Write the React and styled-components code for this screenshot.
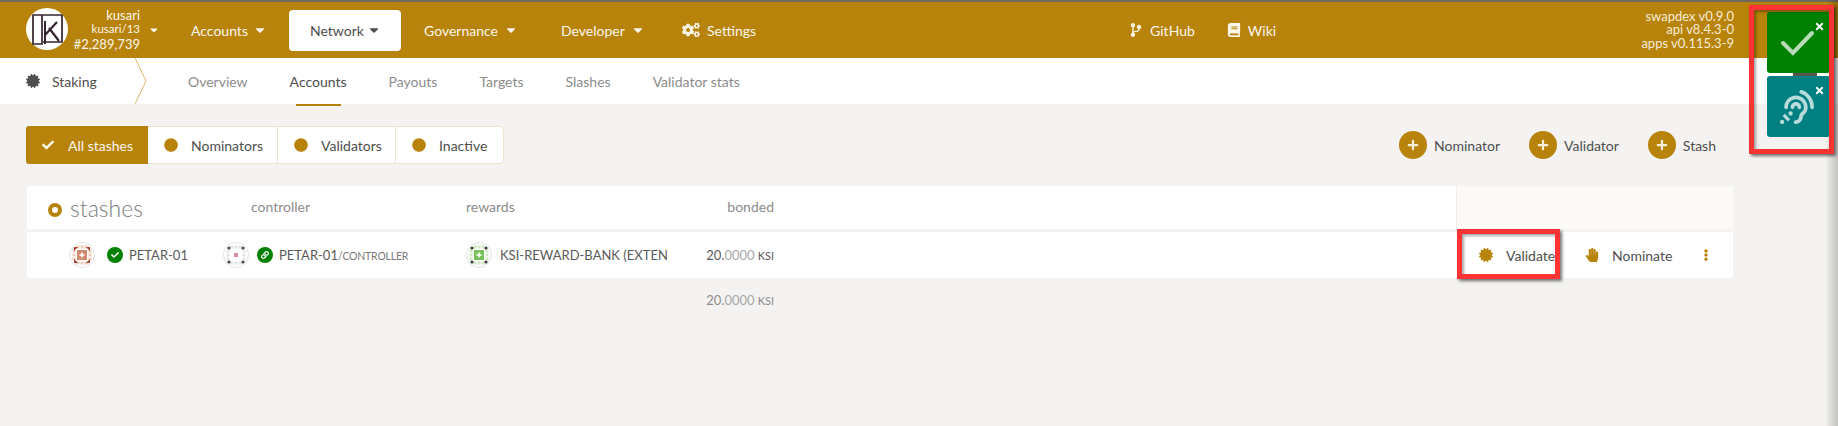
import React from "react";
import styled, { createGlobalStyle } from "styled-components";
import {
  FaCaretDown,
  FaCertificate,
  FaCheck,
  FaCircle,
  FaCodeBranch,
  FaCogs,
  FaBook,
  FaEllipsisV,
  FaHandPaper,
  FaLink,
  FaPlus,
  FaTimes,
  FaAssistiveListeningSystems,
} from "react-icons/fa";

const gold = "#b7830a";

const Global = createGlobalStyle`
  html, body { margin: 0; padding: 0; background: #f4f3f1; }
  body {
    font-family: Lato, "Open Sans", sans-serif;
    font-size: 14px;
    color: #4e4e4e;
    overflow: hidden;
  }
  * { box-sizing: border-box; }
`;

const Page = styled.div`
  position: relative;
  width: 1838px;
  height: 426px;
  overflow: hidden;
`;

const Header = styled.header`
  display: flex;
  align-items: center;
  height: 58px;
  padding-left: 26px;
  background: ${gold};
  border-top: 2px solid #6f6a60;
  color: #fbf6ea;
`;

const LogoWrap = styled.div`
  width: 42px;
  height: 42px;
  flex: none;
  margin-top: -2px;
`;

const Chain = styled.div`
  width: 72px;
  flex: none;
  text-align: right;
  line-height: 14.5px;
  font-size: 13px;
  margin-top: -1px;
  & > div:nth-child(2) { font-size: 11.5px; }
`;

const ChainCaret = styled.div`
  width: 30px;
  flex: none;
  padding-left: 8px;
  font-size: 12px;
  display: flex;
`;

const NavList = styled.nav`
  display: flex;
  align-items: center;
  gap: 2px;
`;

const NavItem = styled.div`
  display: flex;
  align-items: center;
  justify-content: space-between;
  width: ${(p) => p.$w}px;
  height: 41px;
  padding: 0 20px 0 21px;
  border-radius: 4px;
  background: ${(p) => (p.$active ? "#fff" : "transparent")};
  color: ${(p) => (p.$active ? "#4e4e4e" : "#fbf6ea")};
  svg { font-size: 14px; }
`;

const PlainLink = styled.div`
  display: flex;
  align-items: center;
  gap: 7px;
  margin-left: ${(p) => p.$left || 0}px;
  svg { font-size: ${(p) => p.$icon || 15}px; }
`;

const Versions = styled.div`
  margin-left: auto;
  padding-right: 104px;
  text-align: right;
  font-size: 13px;
  line-height: 13.5px;
  color: #f5ecd6;
`;

const SubBar = styled.div`
  display: flex;
  align-items: stretch;
  height: 46px;
  background: #fff;
`;

const Section = styled.div`
  display: flex;
  align-items: center;
  gap: 12px;
  width: 135px;
  padding-left: 26px;
  color: #4e4e4e;
  svg { font-size: 14px; }
`;

const Chevron = styled.svg`
  width: 12px;
  height: 46px;
  flex: none;
  margin-right: 20px;
`;

const Tab = styled.div`
  position: relative;
  display: flex;
  align-items: center;
  padding: 0 21px;
  color: ${(p) => (p.$active ? "#4e4e4e" : "#8c8c8c")};
  &::after {
    content: "";
    display: ${(p) => (p.$active ? "block" : "none")};
    position: absolute;
    left: 27px;
    right: 27px;
    bottom: -2px;
    height: 2px;
    background: ${gold};
  }
`;

const Content = styled.main`
  padding: 22px 105px 0 26px;
`;

const Toolbar = styled.div`
  display: flex;
  align-items: center;
  justify-content: space-between;
`;

const Group = styled.div`
  display: flex;
  height: 38px;
  background: #fff;
  border: 1px solid #eee3cb;
  border-radius: 4px;
`;

const GroupButton = styled.div`
  display: flex;
  align-items: center;
  gap: ${(p) => (p.$active ? 14 : 13)}px;
  width: ${(p) => p.$w}px;
  padding-left: 16px;
  background: ${(p) => (p.$active ? gold : "transparent")};
  color: ${(p) => (p.$active ? "#fbf6ea" : "#4e4e4e")};
  border-right: ${(p) => (p.$last || p.$active ? "none" : "1px solid #eee3cb")};
  border-radius: ${(p) => (p.$active ? "3px 0 0 3px" : "0")};
  margin: ${(p) => (p.$active ? "-1px 0 -1px -1px" : "0")};
  svg {
    font-size: ${(p) => (p.$active ? 12 : 14)}px;
    color: ${(p) => (p.$active ? "#fbf6ea" : gold)};
  }
`;

const AddList = styled.div`
  display: flex;
  align-items: center;
  gap: 29px;
  padding-right: 17px;
`;

const AddButton = styled.div`
  display: flex;
  align-items: center;
  gap: 7px;
`;

const PlusCircle = styled.span`
  display: flex;
  align-items: center;
  justify-content: center;
  width: 28px;
  height: 28px;
  border-radius: 50%;
  background: ${gold};
  color: #f8efd8;
  font-size: 12px;
`;

const Table = styled.div`
  margin-top: 22px;
  margin-left: 1px;
  display: flex;
  flex-direction: column;
  gap: 3px;
`;

const HeadRow = styled.div`
  display: grid;
  grid-template-columns: 224px 215px 308px 1fr 277px;
  height: 43px;
  background: #fff;
  border-radius: 4px 4px 0 0;
  overflow: hidden;
`;

const HeadCell = styled.div`
  display: flex;
  align-items: center;
  justify-content: ${(p) => (p.$right ? "flex-end" : "flex-start")};
  padding-bottom: 2px;
  color: #8c8c8c;
  font-size: 14px;
`;

const Title = styled.div`
  display: flex;
  align-items: center;
  gap: 8px;
  padding-left: 21px;
  font-size: 23px;
  font-weight: 300;
  color: #7d7d7d;
`;

const TitleDot = styled.span`
  width: 14px;
  height: 14px;
  margin-top: 4px;
  border-radius: 50%;
  border: 4px solid ${gold};
  background: #fff;
`;

const ActionsHead = styled.div`
  grid-column: 5;
  background: #fbfaf6;
  border-left: 1px solid #f0efeb;
`;

const Row = styled.div`
  display: grid;
  grid-template-columns: 196px 243px 201px 107px 1fr 277px;
  align-items: center;
  height: ${(p) => (p.$plain ? 38 : 46)}px;
  background: ${(p) => (p.$plain ? "transparent" : "#fff")};
  border-radius: 0 0 4px 4px;
`;

const AccountCell = styled.div`
  display: flex;
  align-items: center;
  min-width: 0;
  padding-left: ${(p) => p.$left || 0}px;
`;

const Name = styled.span`
  margin-left: ${(p) => p.$gap}px;
  white-space: nowrap;
  overflow: hidden;
  font-size: 13px;
  color: #5a5a5a;
`;

const Suffix = styled.span`
  font-size: 10.5px;
  letter-spacing: -0.2px;
  color: #7a7a7a;
`;

const Badge = styled.span`
  display: flex;
  align-items: center;
  justify-content: center;
  width: 16px;
  height: 16px;
  margin-left: ${(p) => p.$left}px;
  flex: none;
  border-radius: 50%;
  background: #008000;
  color: #fff;
  font-size: 8px;
`;

const Balance = styled.div`
  text-align: right;
  white-space: nowrap;
  font-size: 13px;
  color: ${(p) => (p.$muted ? "#8c8c8c" : "#5a5a5a")};
`;

const Decimals = styled.span`
  color: #a8a8a8;
`;

const Unit = styled.span`
  font-size: 11px;
  margin-left: 3px;
`;

const Actions = styled.div`
  grid-column: 6;
  display: flex;
  align-items: center;
  padding-left: 23px;
`;

const Action = styled.div`
  display: flex;
  align-items: center;
  gap: 13px;
  width: ${(p) => p.$w}px;
  svg { color: ${gold}; font-size: 14px; }
`;

const More = styled.span`
  display: flex;
  color: ${gold};
  font-size: 12px;
`;

const ToastColumn = styled.div`
  position: absolute;
  top: 12px;
  left: 1767px;
  display: flex;
  flex-direction: column;
  gap: 3px;
  width: 63px;
  &::after {
    content: "";
    position: absolute;
    top: 61px;
    left: 26px;
    width: 24px;
    height: 3px;
    background: #555;
  }
`;

const Toast = styled.div`
  position: relative;
  display: flex;
  align-items: center;
  justify-content: center;
  height: 61px;
  padding-right: 3px;
  border-radius: 3px;
  background: ${(p) => p.$bg};
  color: rgba(255, 255, 255, 0.72);
  font-size: ${(p) => p.$icon}px;
`;

const ToastClose = styled.span`
  position: absolute;
  top: 9px;
  right: 5px;
  display: flex;
  color: #fff;
  font-size: 11px;
`;

const RedBox = styled.div`
  position: absolute;
  left: ${(p) => p.$x}px;
  top: ${(p) => p.$y}px;
  width: ${(p) => p.$w}px;
  height: ${(p) => p.$h}px;
  border: 5px solid #ff3333;
  box-shadow: 2px 2px 3px rgba(0, 0, 0, 0.55), inset 2px 2px 3px rgba(0, 0, 0, 0.35);
`;

const EdgeShade = styled.div`
  position: absolute;
  top: 0;
  right: 0;
  width: 13px;
  height: 100%;
  background: linear-gradient(to right, rgba(0, 0, 0, 0), rgba(0, 0, 0, 0.2));
`;

const Logo = () => (
  <svg width="42" height="42" viewBox="0 0 42 42">
    <circle cx="21" cy="21" r="21" fill="#fff" />
    <g fill="none" stroke="#33232f" strokeWidth="1.7">
      <path d="M7 7h9v29H7zM16 7h20v27H17" />
      <path d="M19 13v23" strokeWidth="2" />
      <path d="M19 27l12-13M23 20l10 13" strokeWidth="2.2" />
    </g>
  </svg>
);

const CheckMark = () => (
  <svg width="35" height="26" viewBox="0 0 35 26">
    <path d="M3 13l10 10L32 3" fill="none" stroke="rgba(255,255,255,0.72)" strokeWidth="4" strokeLinecap="round" />
  </svg>
);

// small jdenticon-style account picture
const Identicon = ({ core, corner, side, cornerShape }) => {
  const corners = [[5, 5], [21, 5], [5, 21], [21, 21]];
  const sides = [[13, 5], [13, 21], [5, 13], [21, 13], [9, 5], [17, 5], [9, 21], [17, 21], [5, 9], [5, 17], [21, 9], [21, 17]];
  const coreSize = core.size || 10;
  return (
    <svg width="26" height="26" viewBox="0 0 26 26" style={{ flex: "none" }}>
      <circle cx="13" cy="13" r="12.5" fill="#fff" stroke="#e3e3e3" />
      {sides.map(([x, y], i) => (
        <rect key={i} x={x - 1.5} y={y - 1.5} width="3" height="3" fill={side} />
      ))}
      {corners.map(([x, y], i) =>
        cornerShape === "dot" ? (
          <circle key={i} cx={x + (x < 13 ? 1 : -1)} cy={y + (y < 13 ? 1 : -1)} r="1.6" fill={corner} />
        ) : (
          <path
            key={i}
            d={`M${x} ${y}l${x < 13 ? 4 : -4} 0l${x < 13 ? -4 : 4} ${y < 13 ? 4 : -4}z`}
            fill={corner}
          />
        )
      )}
      <rect x={13 - coreSize / 2} y={13 - coreSize / 2} width={coreSize} height={coreSize} fill={core.color} />
      {core.star && <path d="M13 9.5l1 2.5 2.5 1-2.5 1-1 2.5-1-2.5-2.5-1 2.5-1z" fill="#fff" />}
    </svg>
  );
};

const navItems = [
  { label: "Accounts", w: 117 },
  { label: "Network", w: 112, active: true },
  { label: "Governance", w: 135 },
  { label: "Developer", w: 125 },
];

const tabs = ["Overview", "Accounts", "Payouts", "Targets", "Slashes", "Validator stats"];

const App = () => {
  return (
    <Page>
      <Global />
      <Header>
        <LogoWrap>
          <Logo />
        </LogoWrap>
        <Chain>
          <div>kusari</div>
          <div>kusari/13</div>
          <div>#2,289,739</div>
        </Chain>
        <ChainCaret>
          <FaCaretDown />
        </ChainCaret>
        <NavList>
          {navItems.map((item) => (
            <NavItem key={item.label} $w={item.w} $active={item.active}>
              {item.label}
              <FaCaretDown />
            </NavItem>
          ))}
          <PlainLink $left={15} $icon={18}>
            <FaCogs />
            Settings
          </PlainLink>
        </NavList>
        <PlainLink $left={373} $icon={14}>
          <FaCodeBranch />
          GitHub
        </PlainLink>
        <PlainLink $left={32} $icon={14}>
          <FaBook />
          Wiki
        </PlainLink>
        <Versions>
          <div>swapdex v0.9.0</div>
          <div>api v8.4.3-0</div>
          <div>apps v0.115.3-9</div>
        </Versions>
      </Header>

      <SubBar>
        <Section>
          <FaCertificate />
          Staking
        </Section>
        <Chevron viewBox="0 0 12 46">
          <path d="M0 0l11 23L0 46" fill="none" stroke="#dcb76a" />
        </Chevron>
        {tabs.map((t) => (
          <Tab key={t} $active={t === "Accounts"}>
            {t}
          </Tab>
        ))}
      </SubBar>

      <Content>
        <Toolbar>
          <Group>
            <GroupButton $active $w={122}>
              <FaCheck />
              All stashes
            </GroupButton>
            <GroupButton $w={130}>
              <FaCircle />
              Nominators
            </GroupButton>
            <GroupButton $w={118}>
              <FaCircle />
              Validators
            </GroupButton>
            <GroupButton $last $w={107}>
              <FaCircle />
              Inactive
            </GroupButton>
          </Group>
          <AddList>
            <AddButton>
              <PlusCircle><FaPlus /></PlusCircle>
              Nominator
            </AddButton>
            <AddButton>
              <PlusCircle><FaPlus /></PlusCircle>
              Validator
            </AddButton>
            <AddButton>
              <PlusCircle><FaPlus /></PlusCircle>
              Stash
            </AddButton>
          </AddList>
        </Toolbar>

        <Table>
          <HeadRow>
            <Title>
              <TitleDot />
              stashes
            </Title>
            <HeadCell>controller</HeadCell>
            <HeadCell $right>
              <span style={{ marginRight: "auto" }}>rewards</span>
              bonded
            </HeadCell>
            <ActionsHead />
          </HeadRow>
          <Row>
            <AccountCell $left={42}>
              <Identicon core={{ color: "#d08a70", star: true }} corner="#a8412a" side="#f3cdbd" />
              <Badge $left={12}><FaCheck /></Badge>
              <Name $gap={6}>PETAR-01</Name>
            </AccountCell>
            <AccountCell>
              <Identicon core={{ color: "#d98aa8", size: 4 }} corner="#4a4a4a" side="#e6e6e6" cornerShape="dot" />
              <Badge $left={8}><FaLink /></Badge>
              <Name $gap={6}>PETAR-01<Suffix>/CONTROLLER</Suffix></Name>
            </AccountCell>
            <AccountCell>
              <Identicon core={{ color: "#76c25a", star: true }} corner="#3c3c3c" side="#cfe9c2" cornerShape="dot" />
              <Name $gap={8}>KSI-REWARD-BANK (EXTENSION)</Name>
            </AccountCell>
            <Balance>
              20.<Decimals>0000</Decimals><Unit>KSI</Unit>
            </Balance>
            <Actions>
              <Action $w={106}>
                <FaCertificate />
                Validate
              </Action>
              <Action $w={115}>
                <FaHandPaper />
                Nominate
              </Action>
              <More><FaEllipsisV /></More>
            </Actions>
          </Row>
          <Row $plain>
            <span />
            <span />
            <span />
            <Balance $muted>
              20.<Decimals>0000</Decimals><Unit>KSI</Unit>
            </Balance>
          </Row>
        </Table>
      </Content>

      <EdgeShade />
      <ToastColumn>
        <Toast $bg="#008000" $icon={31}>
          <CheckMark />
          <ToastClose><FaTimes /></ToastClose>
        </Toast>
        <Toast $bg="#008080" $icon={34}>
          <FaAssistiveListeningSystems />
          <ToastClose><FaTimes /></ToastClose>
        </Toast>
      </ToastColumn>
      <RedBox $x={1749} $y={5} $w={85} $h={149} />
      <RedBox $x={1457} $y={229} $w={103} $h={50} />
    </Page>
  );
};

export default App;
